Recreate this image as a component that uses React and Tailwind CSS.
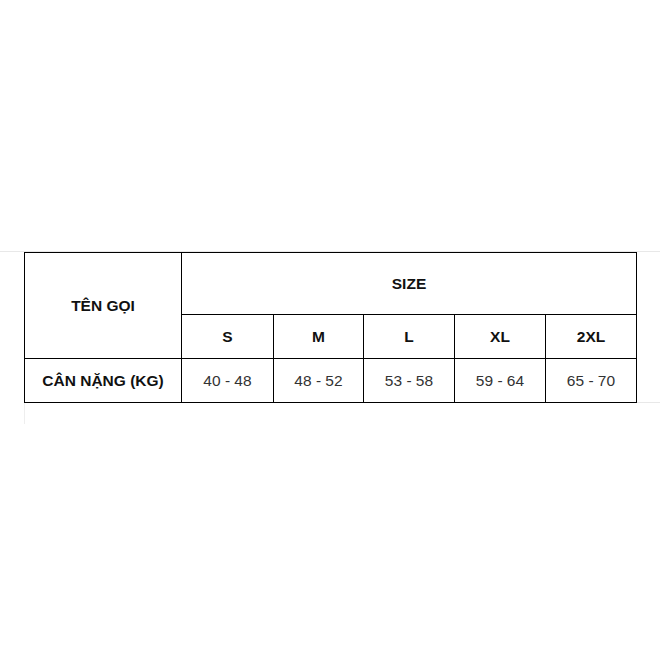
import React from "react";

const sizes = ["S", "M", "L", "XL", "2XL"];
const weights = ["40 - 48", "48 - 52", "53 - 58", "59 - 64", "65 - 70"];

export default function App() {
  const font = { fontFamily: '"Liberation Sans", Arial, sans-serif' };
  return (
    <div className="relative w-[660px] h-[660px] bg-white" style={font}>
      <div className="pt-[251px]">
        <div className="border-t border-[#e8e8e8] pl-[24px]">
          <div className="relative w-[613px]">
            <div className="grid grid-cols-[157px_92px_90px_91px_91px_91px] grid-rows-[62px_44px_44px] border-l border-t border-black text-[15.5px]">
              <div className="row-span-2 flex items-center justify-center border-r border-b border-black font-bold text-[#111]">
                TÊN GỌI
              </div>
              <div className="col-span-5 flex items-center justify-center border-r border-b border-black font-bold text-[#111]">
                SIZE
              </div>
              {sizes.map((s) => (
                <div
                  key={s}
                  className="flex items-center justify-center border-r border-b border-black font-bold text-[#111]"
                >
                  {s}
                </div>
              ))}
              <div className="flex items-center justify-center border-r border-b border-black font-bold text-[#111]">
                CÂN NẶNG (KG)
              </div>
              {weights.map((w) => (
                <div
                  key={w}
                  className="flex items-center justify-center border-r border-b border-black text-[#333]"
                >
                  {w}
                </div>
              ))}
            </div>
            <div className="absolute left-[613px] bottom-0 w-[24px] h-px bg-[#e8e8e8]" />
            <div className="absolute left-0 top-full w-px h-[21px] bg-[#eeeeee]" />
          </div>
        </div>
      </div>
    </div>
  );
}
